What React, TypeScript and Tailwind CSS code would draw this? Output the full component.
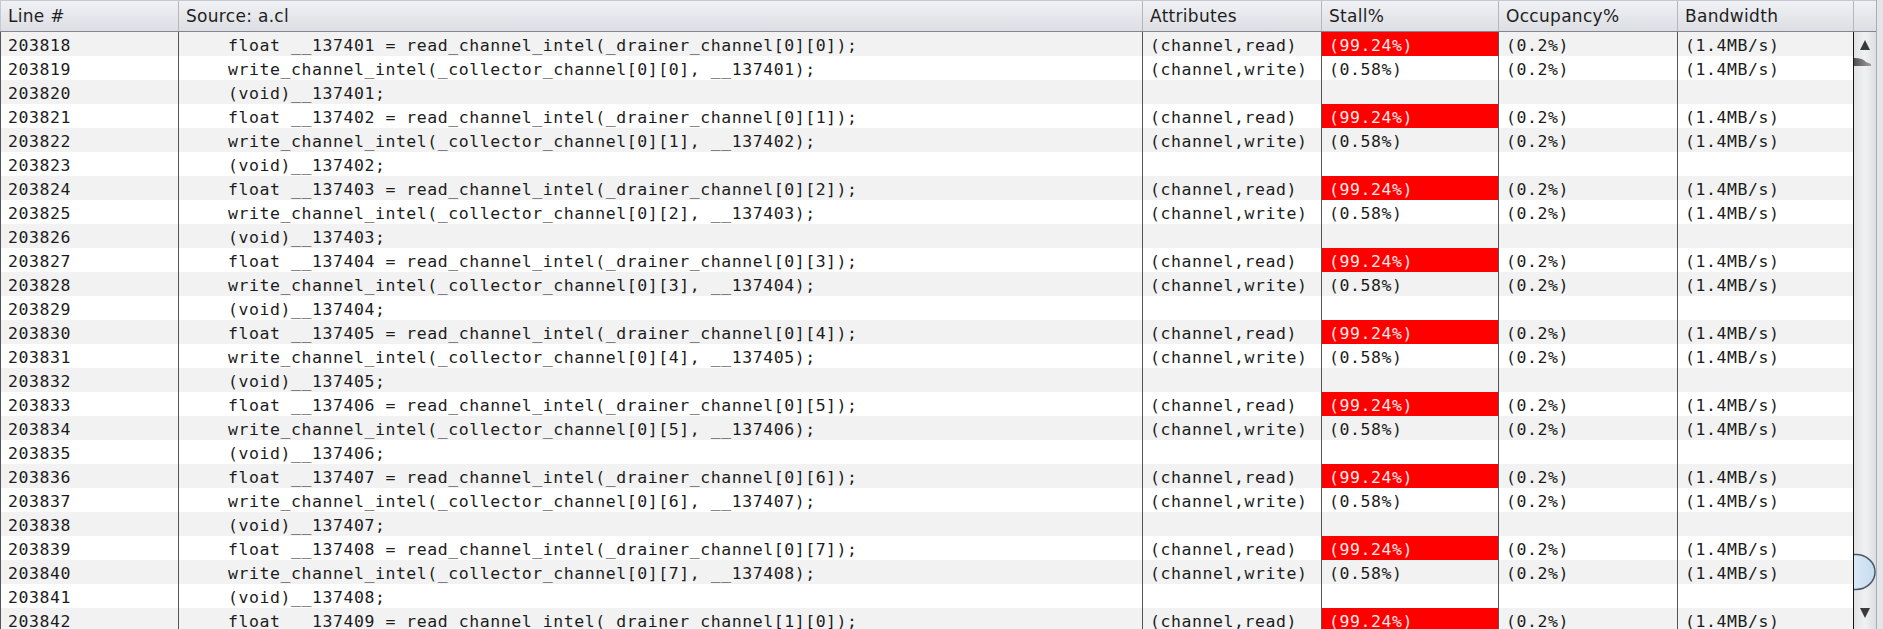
import React from "react";

type Row = {
  line: number;
  source: string;
  attr: string;
  stall: string;
  occupancy: string;
  bandwidth: string;
  hot?: boolean;
};

// widths include the 1px right border of each column
const COLS = ["w-[179px]", "w-[964px]", "w-[179px]", "w-[177px]", "w-[179px]", "w-[176px]"];

function buildRows(): Row[] {
  const rows: Row[] = [];
  let line = 203818;
  for (let k = 0; k < 9; k++) {
    const id = `__${137401 + k}`;
    const idx = `[${Math.floor(k / 8)}][${k % 8}]`;
    rows.push({
      line: line++,
      source: `    float ${id} = read_channel_intel(_drainer_channel${idx});`,
      attr: "(channel,read)",
      stall: "(99.24%)",
      occupancy: "(0.2%)",
      bandwidth: "(1.4MB/s)",
      hot: true,
    });
    rows.push({
      line: line++,
      source: `    write_channel_intel(_collector_channel${idx}, ${id});`,
      attr: "(channel,write)",
      stall: "(0.58%)",
      occupancy: "(0.2%)",
      bandwidth: "(1.4MB/s)",
    });
    rows.push({
      line: line++,
      source: `    (void)${id};`,
      attr: "",
      stall: "",
      occupancy: "",
      bandwidth: "",
    });
  }
  return rows.slice(0, 25);
}

const HEADERS = ["Line #", "Source: a.cl", "Attributes", "Stall%", "Occupancy%", "Bandwidth"];

function Scrollbar() {
  return (
    <div className="w-[22px] h-full bg-gradient-to-r from-[#e2e3e5] via-[#f1f1f2] to-[#dcdde0]">
      <svg width="22" height="597" viewBox="0 0 22 597">
        <defs>
          <linearGradient id="thumb" x1="0" x2="1" y1="0" y2="0">
            <stop offset="0" stopColor="#eaf2fb" />
            <stop offset="1" stopColor="#c6dcf0" />
          </linearGradient>
          <linearGradient id="cap" x1="0" x2="1" y1="0" y2="0">
            <stop offset="0" stopColor="#2a2a2a" />
            <stop offset="1" stopColor="#8a8a8a" />
          </linearGradient>
        </defs>
        <polygon points="6,18 16,18 11,8" fill="#3a3a3a" />
        <path d="M0 26 Q9 26 12 30 L17 32 L17 34 L0 34 Z" fill="url(#cap)" opacity="0.8" />
        <ellipse cx="2" cy="540" rx="19" ry="17.5" fill="url(#thumb)" stroke="#4b5866" strokeWidth="1.5" />
        <polygon points="6,576 16,576 11,586" fill="#3a3a3a" />
      </svg>
    </div>
  );
}

export default function App() {
  const rows = buildRows();
  return (
    <div className="w-[1883px] h-[629px] overflow-hidden flex bg-[#e3e6ea]">
      <div className="w-[1876px] flex flex-col">
        <div className="flex h-[32px] shrink-0 border-t border-b border-t-[#c6c9cf] border-b-[#83868d] bg-gradient-to-b from-[#f0f1f4] to-[#dcdee3] font-['DejaVu_Sans',sans-serif] text-[17px] tracking-[0.3px] text-[#1f1f1f]">
          {HEADERS.map((h, i) => (
            <div
              key={h}
              className={`${COLS[i]} shrink-0 flex items-center pl-[7px] pt-[2px] border-r border-[#b4b7bd] whitespace-nowrap ${
                i === 0 ? "border-l border-l-[#c6c9cf]" : ""
              }`}
            >
              {h}
            </div>
          ))}
          <div className="w-[22px] shrink-0" />
        </div>
        <div className="flex flex-1 min-h-0">
          <div className="w-[1854px] shrink-0 font-['DejaVu_Sans_Mono',monospace] text-[16.5px] tracking-[0.56px] text-[#1c1c1c]">
            {rows.map((r, i) => {
              const cells = [String(r.line), r.source, r.attr, r.stall, r.occupancy, r.bandwidth];
              return (
                <div
                  key={r.line}
                  className={`flex h-[24px] ${i % 2 === 0 ? "bg-[#f2f2f2]" : "bg-white"}`}
                >
                  {cells.map((c, j) => (
                    <div
                      key={j}
                      className={`${COLS[j]} shrink-0 h-[24px] pl-[7px] pt-[2px] leading-[24px] whitespace-pre overflow-hidden border-r ${
                        j === 5 ? "border-[#141414]" : "border-[#555]"
                      } ${j === 0 ? "border-l border-l-[#555]" : ""} ${
                        j === 3 && r.hot ? "bg-[#ff0000] text-[#ffe6e6]" : ""
                      }`}
                    >
                      {c}
                    </div>
                  ))}
                </div>
              );
            })}
          </div>
          <Scrollbar />
        </div>
      </div>
      <div className="w-[7px] border-l border-[#a9adb4] bg-[#e2e5e9]" />
    </div>
  );
}
